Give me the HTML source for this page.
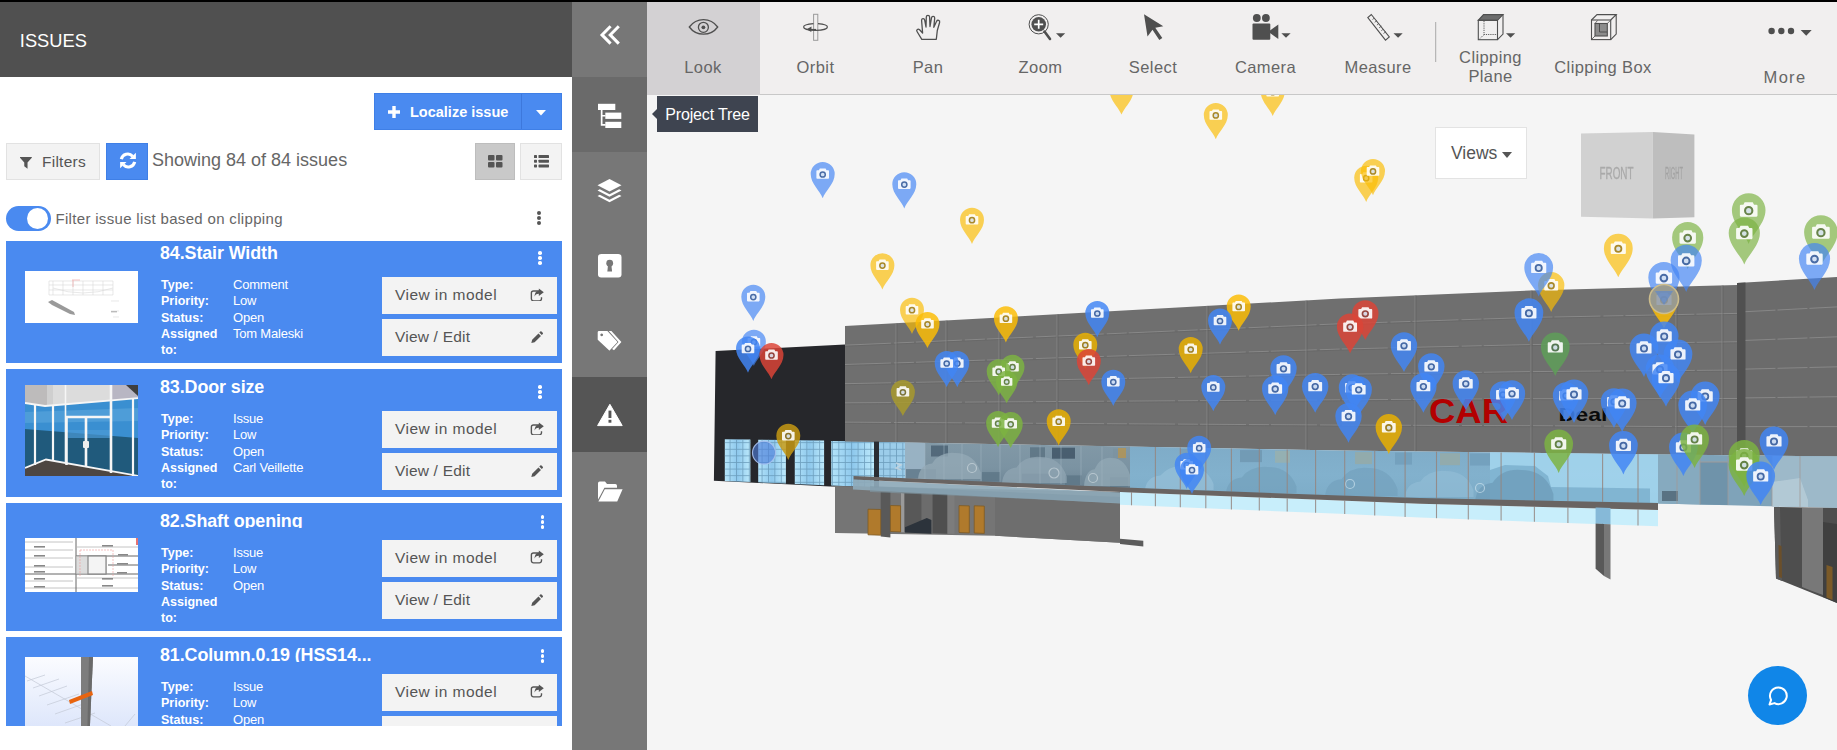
<!DOCTYPE html>
<html lang="en">
<head>
<meta charset="utf-8">
<title>Issues</title>
<style>
*{box-sizing:border-box;margin:0;padding:0}
html,body{width:1837px;height:750px;overflow:hidden;background:#fff;font-family:"Liberation Sans",sans-serif;}
body{position:relative}
.abs{position:absolute}
#topbar{left:0;top:0;width:1837px;height:2px;background:#000;z-index:50}
/* left panel */
#phead{left:0;top:2px;width:572px;height:75px;background:#505050;color:#fff}
#phead span{position:absolute;left:19.800px;top:27px;font-size:18.300px;line-height:24px;letter-spacing:0}
.btn-blue{background:#4a8af0;color:#fff;border:1px solid #3f7fe6}
#loc{left:374px;top:93px;width:188px;height:37px}
#loc .t{position:absolute;left:35px;top:8px;font-size:14.5px;font-weight:bold;line-height:20px;white-space:nowrap}
#loc .div{position:absolute;left:146px;top:0;width:1px;height:35px;background:#3d78dc}
.lbtn{background:#f3f3f3;border:1px solid #e2e2e2}
#filters{left:6px;top:143px;width:94px;height:37px}
#filters span{position:absolute;left:35px;top:8px;font-size:15.500px;color:#555;line-height:20px;letter-spacing:.25px}
#refresh{left:106px;top:143px;width:42px;height:37px}
#showing{left:152px;top:147px;font-size:18px;line-height:26px;color:#666;white-space:nowrap;letter-spacing:0}
#grid{left:475px;top:143px;width:40px;height:37px;background:#c9c9c9;border:1px solid #bdbdbd}
#list{left:520px;top:143px;width:42px;height:37px}
#toggle{left:6px;top:206px;width:45px;height:25px;border-radius:13px;background:#4a8af0}
#toggle i{position:absolute;left:21.300px;top:2px;width:21px;height:21px;border-radius:50%;background:#fff}
#ftxt{left:55.400px;top:208px;font-size:15px;line-height:22px;color:#666;white-space:nowrap;letter-spacing:.33px}
.kebab{width:4px;height:4px;border-radius:50%;background:#555;box-shadow:0 5px 0 #555,0 -5px 0 #555}
#listwrap{left:6px;top:241px;width:556px;height:485px;overflow:hidden}
.card{position:absolute;left:0;width:556px;height:128px;background:#4a8af0;color:#fff}
.card .title{position:absolute;left:154px;top:5.800px;font-size:17.900px;font-weight:bold;line-height:24px;height:19.400px;overflow:hidden;white-space:nowrap;letter-spacing:-.1px}
.card.c2 .b1{top:36.500px}.card.c2 .b2{top:78.800px}.card.c2 .kebab{left:534.500px;top:17px}
.card .lab{position:absolute;left:155px;top:42px;font-size:12.5px;font-weight:bold;line-height:16.3px;width:60px}
.card .val{position:absolute;left:227px;top:42px;font-size:13px;line-height:16.3px;white-space:nowrap;letter-spacing:-.2px}
.card .b{position:absolute;left:376px;width:175px;height:37px;background:#f3f3f3;color:#555;font-size:15.5px;line-height:20px}
.card .b span{position:absolute;left:13px;top:8px;white-space:nowrap;letter-spacing:.2px}
.card .b1 span{letter-spacing:.45px}
.card .b1{top:42px}.card .b2{top:84px}
.card .b svg{position:absolute;right:13.500px;top:10.500px;width:13.800px;height:13.800px}
.card .b2 svg{top:12px;width:13.400px;height:13.400px}
.card .kebab{position:absolute;left:532px;top:21px;background:#fff;box-shadow:0 5px 0 #fff,0 -5px 0 #fff;width:3.5px;height:3.5px}
.card .thumb{position:absolute;left:18.500px;width:113.500px;overflow:hidden;background:#fff}
/* sidebar */
#side{left:572px;top:2px;width:75px;height:748px;background:#777}
#side .it{position:absolute;left:0;width:75px;height:75px}
#side svg{position:absolute}
/* toolbar */
#tb{left:647px;top:2px;width:1190px;height:93px;background:#f1efef;border-bottom:1px solid #c8c8c8;z-index:20}
#tb .tl{position:absolute;width:113px;text-align:center;font-size:16.500px;line-height:19px;color:#666;letter-spacing:.4px}
#tb svg{position:absolute;overflow:visible}
#view{left:647px;top:95px;width:1190px;height:655px;background:#f5f5f5;overflow:hidden}
#tip{left:657px;top:96px;width:101px;height:36px;background:#3e4450;color:#fff;font-size:16px;line-height:38px;text-align:center;z-index:30;letter-spacing:-.15px}
#tip:before{content:"";position:absolute;left:-5px;top:13px;border:5px solid transparent;border-left:0;border-right:5px solid #3e4450}
#views{left:1435px;top:127px;width:92px;height:52px;background:#fff;border:1px solid #e3e3e3;z-index:10}
#views span{position:absolute;left:15px;top:13px;font-size:17.5px;color:#555;line-height:24px}
#views i{position:absolute;left:66px;top:24px;border:5.5px solid transparent;border-top:6px solid #555;border-bottom:0}
#chat{left:1748px;top:666px;width:59px;height:59px;border-radius:50%;background:#1086e8;z-index:10}
</style>
</head>
<body>
<div id="topbar" class="abs"></div>

<!-- LEFT PANEL -->
<div id="phead" class="abs"><span>ISSUES</span></div>
<div id="loc" class="abs btn-blue">
 <svg class="abs" style="left:12.500px;top:11.500px" width="12" height="12" viewBox="0 0 12 12"><path d="M4.300 0h3.400v4.300H12v3.400H7.700V12H4.300V7.700H0V4.300h4.300z" fill="#fff"/></svg>
 <span class="t">Localize issue</span><div class="div"></div>
 <svg class="abs" style="left:161px;top:16px" width="10" height="6" viewBox="0 0 10 6"><path d="M0 0h10L5 5.5z" fill="#fff"/></svg>
</div>
<div id="filters" class="abs lbtn">
 <svg class="abs" style="left:13px;top:12.500px" width="11.800" height="12" viewBox="0 0 13 13" preserveAspectRatio="none"><path d="M.3 0h12.400a.5.500 0 0 1 .3.800L8.300 6v6.800L4.700 10V6L0 .8A.5.500 0 0 1 .3 0z" fill="#555"/></svg>
 <span>Filters</span></div>
<div id="refresh" class="abs btn-blue">
 <svg class="abs" style="left:11.500px;top:8.300px" width="18" height="17" viewBox="0 0 18 17" fill="none" stroke="#fff" stroke-width="3.100"><path d="M2.300 7.200A6.600 6.600 0 0 1 13.600 4.200"/><path d="M15.700 9.800A6.600 6.600 0 0 1 4.400 12.800"/><path d="M16.900 .7v6.400h-6.400z" fill="#fff" stroke="none"/><path d="M1.100 16.300v-6.400h6.400z" fill="#fff" stroke="none"/></svg>
</div>
<div id="showing" class="abs">Showing 84 of 84 issues</div>
<div id="grid" class="abs">
 <svg class="abs" style="left:12px;top:11px" width="15" height="13" viewBox="0 0 15 13" fill="#555"><rect x="0" y="0" width="6.5" height="5.5" rx="1"/><rect x="8" y="0" width="6.5" height="5.5" rx="1"/><rect x="0" y="7" width="6.5" height="5.5" rx="1"/><rect x="8" y="7" width="6.5" height="5.5" rx="1"/></svg>
</div>
<div id="list" class="abs lbtn">
 <svg class="abs" style="left:13px;top:11px" width="15" height="13" viewBox="0 0 15 13" fill="#555"><rect x="0" y="0" width="3" height="3" rx=".6"/><rect x="4.5" y="0" width="10.5" height="3" rx=".6"/><rect x="0" y="4.7" width="3" height="3" rx=".6"/><rect x="4.5" y="4.7" width="10.5" height="3" rx=".6"/><rect x="0" y="9.4" width="3" height="3" rx=".6"/><rect x="4.5" y="9.4" width="10.5" height="3" rx=".6"/></svg>
</div>
<div id="toggle" class="abs"><i></i></div>
<div id="ftxt" class="abs">Filter issue list based on clipping</div>
<div class="abs kebab" style="left:537px;top:216px"></div>

<div id="listwrap" class="abs">
<div class="card" style="top:-6px">
 <div class="title">84.Stair Width</div>
 <div class="lab">Type:<br>Priority:<br>Status:<br>Assigned to:</div>
 <div class="val">Comment<br>Low<br>Open<br>Tom Maleski</div>
 <div class="kebab"></div>
 <div class="thumb" style="top:36px;height:52px">
  <svg width="114" height="52" viewBox="0 0 114 52"><rect width="114" height="52" fill="#fff"/>
   <g stroke="#d9d9d9" stroke-width=".6" fill="none"><path d="M24 10h64v14H24zM28 10v14M38 10v14M48 10v14M58 10v14M68 10v14M78 10v14M24 14h64M24 19h64"/><path d="M28 17q30 10 60 0"/><path d="M86 30h8M86 40h8M88 46h6"/></g>
   <path d="M47 9h8M48 9v7" stroke="#f0b0b0" stroke-width=".8" fill="none"/>
   <path d="M23 31l4-2 22 12 1 3-5-1-18-9z" fill="#9a9a9a"/>
   <rect x="86" y="40" width="6" height="1.4" fill="#bbb"/>
  </svg>
 </div>
 <div class="b b1"><span>View in model</span><svg width="15" height="15" viewBox="0 0 15 15"><use href="#i-share"/></svg></div>
 <div class="b b2"><span>View / Edit</span><svg width="15" height="15" viewBox="0 0 15 15"><use href="#i-pen"/></svg></div>
</div>

<div class="card" style="top:128px">
 <div class="title">83.Door size</div>
 <div class="lab">Type:<br>Priority:<br>Status:<br>Assigned to:</div>
 <div class="val">Issue<br>Low<br>Open<br>Carl Veillette</div>
 <div class="kebab"></div>
 <div class="thumb" style="top:16px;height:91px">
  <svg width="114" height="91" viewBox="0 0 114 91">
   <rect width="114" height="91" fill="#205a7c"/>
   <path d="M0 18l20 3 94-8v40L0 44z" fill="#3a8fd1"/>
   <path d="M0 27l114-4v13L0 38z" fill="#62abe0" opacity=".5"/>
   <path d="M43 45h42v8H43z" fill="#4b9ad6" opacity=".7"/>
   <path d="M0 0h114v13L20 21 0 18z" fill="#dcdcdc"/><path d="M0 0h22v21L0 18z" fill="#bdbbbb"/><path d="M22 0h6v20l-6 1z" fill="#cfcfcf"/><path d="M87 0h27v13l-27 2.300z" fill="#b8b6c3"/><path d="M101 0h13v12z" fill="#3f3f3f"/>
   <path d="M0 83l21-8.500L114 91H0z" fill="#4d4641"/>
   <g stroke="#f6f6f6" fill="none"><path d="M0 18l20 3 94-8" stroke-width="1.800"/><path d="M10 20v60M28 21v55" stroke-width="2.200"/><path d="M40.500 0v78" stroke-width="1.600"/><path d="M41 32h45" stroke-width="2.400"/><path d="M41.500 32v48M61 32v49" stroke-width="2.600"/><path d="M86 0v88" stroke-width="2.600"/><path d="M108 13v78" stroke-width="2.200"/><path d="M0 83l21-8.500L114 91" stroke-width="1.800"/></g>
   <rect x="58" y="56" width="6" height="7" rx="1" fill="#ededed"/>
  </svg>
 </div>
 <div class="b b1"><span>View in model</span><svg width="15" height="15" viewBox="0 0 15 15"><use href="#i-share"/></svg></div>
 <div class="b b2"><span>View / Edit</span><svg width="15" height="15" viewBox="0 0 15 15"><use href="#i-pen"/></svg></div>
</div>

<div class="card c2" style="top:262px">
 <div class="title">82.Shaft opening</div>
 <div class="lab">Type:<br>Priority:<br>Status:<br>Assigned to:</div>
 <div class="val">Issue<br>Low<br>Open</div>
 <div class="kebab"></div>
 <div class="thumb" style="top:35px;height:54px">
  <svg width="114" height="54" viewBox="0 0 114 54"><rect width="114" height="54" fill="#fff"/>
   <g stroke="#b5b5b5" stroke-width=".8" fill="none"><path d="M0 4h48M0 12h48M0 20h48M0 29h48M0 43h48M0 50h114M52 9h62M52 40h62"/></g>
   <g stroke="#666" stroke-width="1" fill="none"><path d="M51 0v54M0 36h114M51 18h63M83 27h30"/></g>
   <rect x="51" y="18" width="30" height="18" fill="#ddd" stroke="#999" stroke-width=".8"/><rect x="63" y="18" width="18" height="18" fill="#f4f4f4" stroke="#888" stroke-width="1.2"/>
   <path d="M55 12h33v26M55 12v26" stroke="#ef9a9a" stroke-width=".6" fill="none" stroke-dasharray="2 1"/>
   <g fill="#888"><rect x="9" y="8" width="11" height="1.6"/><rect x="9" y="17" width="11" height="1.6"/><rect x="9" y="27" width="11" height="1.6"/><rect x="9" y="33" width="11" height="1.6"/><rect x="9" y="40" width="11" height="1.6"/><rect x="9" y="48" width="11" height="1.6"/><rect x="77" y="7" width="11" height="1.6"/><rect x="77" y="40" width="11" height="1.6"/><rect x="77" y="47" width="11" height="1.6"/><rect x="93" y="16" width="10" height="1.6"/><rect x="92" y="25" width="11" height="1.6"/><rect x="92" y="34" width="10" height="1.6"/></g>
   <rect x="111" y="0" width="2" height="7" fill="#e57373"/>
  </svg>
 </div>
 <div class="b b1"><span>View in model</span><svg width="15" height="15" viewBox="0 0 15 15"><use href="#i-share"/></svg></div>
 <div class="b b2"><span>View / Edit</span><svg width="15" height="15" viewBox="0 0 15 15"><use href="#i-pen"/></svg></div>
</div>

<div class="card c2" style="top:396px">
 <div class="title">81.Column.0.19 (HSS14...</div>
 <div class="lab">Type:<br>Priority:<br>Status:<br>Assigned to:</div>
 <div class="val">Issue<br>Low<br>Open</div>
 <div class="kebab"></div>
 <div class="thumb" style="top:20px;height:90px">
  <svg width="114" height="90" viewBox="0 0 114 90"><defs><linearGradient id="cg" x1="0" y1="0" x2="0" y2="1"><stop offset="0" stop-color="#fbfcff"/><stop offset="1" stop-color="#d5e0fa"/></linearGradient></defs>
   <rect width="114" height="90" fill="url(#cg)"/>
   <g stroke="#c3c9d6" stroke-width=".7" fill="none"><path d="M0 19l86 50M2 24l18-6M8 31l26-9M14 39l28-10M22 48l32-11M30 57l34-12M40 66l30-10M100 69l10-12"/></g>
   <path d="M56 0h12l-4 90h-8z" fill="#7d7d7d"/><path d="M64 0h4l-4 90h-2z" fill="#6a6a6a"/>
   <path d="M44 43l23-9 1 4-23 9z" fill="#e8640f"/>
  </svg>
 </div>
 <div class="b b1"><span>View in model</span><svg width="15" height="15" viewBox="0 0 15 15"><use href="#i-share"/></svg></div>
 <div class="b b2"><span>View / Edit</span><svg width="15" height="15" viewBox="0 0 15 15"><use href="#i-pen"/></svg></div>
</div>
<svg width="0" height="0" style="position:absolute"><defs>
 <g id="i-share"><path d="M10 3.2H3.8A2.3 2.3 0 0 0 1.5 5.500v6.200A2.300 2.300 0 0 0 3.800 14h6.400a2.300 2.300 0 0 0 2.300-2.300V10" fill="none" stroke="#555" stroke-width="1.500"/><path d="M9.600 0.500 15 4.600 9.600 8.700V6.200C6.800 6.200 5.600 7.400 5 9.300 5 6 6.500 3.200 9.600 3z" fill="#555"/></g>
 <g id="i-pen"><path d="M1.500 13.500l.9-3.700 7.100-7.100 2.800 2.800-7.100 7.100zM10.400 1.800l1.100-1.100a1 1 0 0 1 1.400 0l1.400 1.400a1 1 0 0 1 0 1.400l-1.100 1.100z" fill="#555"/></g>
</defs></svg>

</div>

<!-- SIDEBAR -->
<div id="side" class="abs">
<div class="it" style="top:75px;background:#6a6a6a"></div>
<div class="it" style="top:375px;background:#555"></div>
<svg style="left:0;top:0" width="75" height="748" viewBox="572 2 75 748">
 <g fill="none" stroke="#fff" stroke-width="3" stroke-linejoin="miter"><path d="M610.600 26.200 602 34.900 610.600 43.600"/><path d="M618.800 26.200 610.200 34.900 618.800 43.600"/></g>
 <g fill="#fff"><rect x="598" y="103.800" width="17.300" height="6.200"/><rect x="605.300" y="112.600" width="16" height="6.300"/><rect x="605.300" y="121.800" width="16" height="6.200"/><path d="M600.800 109.500h1.700v5.400h3v1.600h-3v7.600h3v1.600h-4.700z"/></g>
 <g fill="#fff"><path d="M609.500 179 621.500 185.200 609.500 191.400 597.500 185.200z"/><path d="M599.800 189.300 609.500 194.300 619.200 189.300 621.500 190.500 609.500 196.800 597.500 190.500z"/><path d="M599.800 194.800 609.500 199.800 619.200 194.800 621.500 196 609.500 202.300 597.500 196z"/></g>
 <g><rect x="598" y="254" width="23.500" height="23.500" rx="3.200" fill="#fff"/><circle cx="609.700" cy="263.200" r="3.400" fill="#777"/><path d="M608.200 264h3l.9 7.500h-4.800z" fill="#777"/></g>
 <g fill="#fff"><path d="M599 330.900h8.400l9.700 10.700a.6.600 0 0 1 0 .8l-7.300 7.900a.6.600 0 0 1-.8 0l-11-10.300a1 1 0 0 1-.3-.7v-7.100a1.300 1.300 0 0 1 1.300-1.300zM601.700 333.500a1.400 1.400 0 1 0 .01 0z" fill-rule="evenodd"/><path d="M608.800 330.900h2.600l10 11.100-7.400 8.200-1.900-1.200 6.400-7z"/></g>
 <g><path d="M609.900 404.300 622.200 425.600H597.600z" fill="#fff" stroke="#fff" stroke-width="1" stroke-linejoin="round"/><rect x="608.500" y="410.600" width="2.900" height="7.400" fill="#555"/><rect x="608.500" y="419.800" width="2.900" height="2.900" fill="#555"/></g>
 <g fill="#fff"><path d="M598 483.300a1.700 1.700 0 0 1 1.700-1.700h5.300l2 2.400h8.300a1.700 1.700 0 0 1 1.700 1.700v2h-12.600l-4.500 8.600-1.900 3.200z"/><path d="M604.800 489.300H622.600L617.200 501.400H598.400z"/></g>
</svg>

</div>

<!-- TOOLBAR -->
<div id="tb" class="abs">
<div style="position:absolute;left:0;top:0;width:113px;height:93px;background:#d3d1d3"></div>
<div class="tl" style="left:-.5px;top:56px">Look</div>
<div class="tl" style="left:112px;top:56px">Orbit</div>
<div class="tl" style="left:224.500px;top:56px">Pan</div>
<div class="tl" style="left:337px;top:56px">Zoom</div>
<div class="tl" style="left:449.500px;top:56px">Select</div>
<div class="tl" style="left:562px;top:56px">Camera</div>
<div class="tl" style="left:674.500px;top:56px">Measure</div>
<div class="tl" style="left:787px;top:45.800px;line-height:18.700px">Clipping<br>Plane</div>
<div class="tl" style="left:899.500px;top:56px">Clipping Box</div>
<div class="tl" style="left:1081.500px;top:65.700px;letter-spacing:1.300px">More</div>
<svg style="left:0;top:0" width="1190" height="93" viewBox="647 2 1190 93">
 <!-- eye -->
 <g fill="none" stroke="#4f4f4f" stroke-width="1.300"><path d="M689.300 27C693 22 698 19.600 703.500 19.600S714 22 717.700 27C714 32 709 34.200 703.500 34.200S693 32 689.300 27z"/><circle cx="703.400" cy="27.300" r="5"/></g><circle cx="703.400" cy="27.300" r="1.900" fill="#4f4f4f"/>
 <!-- orbit -->
 <rect x="813.600" y="14.300" width="4.200" height="26" fill="#f1efef" stroke="#9a9a9a" stroke-width="1"/>
 <path d="M813.500 23.600C807 24.200 803.600 25.500 803.600 26.900 803.600 29 809 30.400 815.600 30.400S827.400 29 827.400 26.900C827.400 25.400 823.500 24.100 818 23.600" fill="none" stroke="#4f4f4f" stroke-width="1.200"/>
 <path d="M806.600 29.300 811.500 26.600 811.300 31.900z" fill="#4f4f4f"/><path d="M811 29.500h5" stroke="#4f4f4f" stroke-width="1.200"/>
 <!-- hand -->
 <path d="M921.800 39.300 917 31.500C916 29.800 918 28.300 919.600 29.800L922.600 33 921.600 20.500C921.400 18.300 924.300 18 924.700 20.200L926 27 926.300 17C926.400 14.700 929.500 14.700 929.600 17L930 26.500 931.500 17.800C931.900 15.600 934.900 16 934.700 18.200L933.800 27.300 936.600 21.300C937.500 19.400 940.200 20.400 939.600 22.500L937.300 30.500 936.300 39.300z" fill="none" stroke="#4f4f4f" stroke-width="1.300" stroke-linejoin="round"/>
 <!-- zoom -->
 <circle cx="1038.700" cy="24.300" r="9.600" fill="none" stroke="#4f4f4f" stroke-width="1"/><circle cx="1038.700" cy="24.300" r="7.300" fill="#4f4f4f"/><path d="M1034.200 24.300h9M1038.700 19.800v9" stroke="#fff" stroke-width="1.700"/><path d="M1044.500 31.500 1050 39" stroke="#4f4f4f" stroke-width="2.600" stroke-linecap="round"/>
 <path d="M1056 33.300h9.200l-4.600 4.500z" fill="#4f4f4f"/>
 <!-- select -->
 <path d="M1144 14.300 1163.300 26.300 1155.300 27.800 1162.300 38 1159.300 40 1152.500 29.800 1147.500 36.500z" fill="#4f4f4f"/>
 <!-- camera -->
 <g fill="#4f4f4f"><circle cx="1256.800" cy="18" r="3.900"/><circle cx="1265.900" cy="18" r="3.900"/><rect x="1252.500" y="23.400" width="17.800" height="16.400" rx="1"/><path d="M1270 30.500 1278.300 24.500V39L1270 33z"/><path d="M1281.400 33.300h9.200l-4.600 4.500z"/></g>
 <!-- measure -->
 <g><path d="M1371.300 14.500 1389.300 37 1385.500 40.200 1367.800 17.500z" fill="#f1efef" stroke="#4f4f4f" stroke-width="1.100"/><path d="M1372.500 19.500l1.500-1.200M1374.700 22.300l2.300-1.800M1376.900 25.100l1.500-1.200M1379.100 27.900l2.300-1.800M1381.300 30.700l1.500-1.200M1383.500 33.500l2.300-1.800" stroke="#4f4f4f" stroke-width=".8"/><path d="M1393.500 33.300h9.200l-4.600 4.500z" fill="#4f4f4f"/></g>
 <!-- divider -->
 <rect x="1435.200" y="22" width="1" height="40" fill="#a9a9a9"/>
 <!-- clipping plane -->
 <g fill="none" stroke="#4f4f4f" stroke-width="1.100"><path d="M1483.500 14.600h19.500l-5.500 5.700h-19.200z" fill="#6c6c6c"/><rect x="1478.300" y="20.300" width="19.200" height="19.400"/><path d="M1503 14.600v19.500l-5.500 5.600"/><path d="M1484 21v13.500h13M1484 34.500l-5 5" stroke-dasharray="1.200 1" stroke-width=".9"/></g>
 <path d="M1506 33.300h9.200l-4.600 4.500z" fill="#4f4f4f"/>
 <!-- clipping box -->
 <g fill="none" stroke="#4f4f4f" stroke-width="1.100"><rect x="1591.500" y="20" width="19.200" height="19.600"/><path d="M1591.500 20 1597 14.600h19.200l-5.500 5.400M1616.200 14.600v19.500l-5.500 5.500"/><rect x="1595" y="23.500" width="12.300" height="12.500" fill="#8c8c8c"/><path d="M1599.500 24v8h7.500" stroke-width="1"/><path d="M1595 23.500l2.500-3M1607.300 23.500l3-3M1595 36l-3 3" stroke-width=".8"/></g>
 <!-- more -->
 <g fill="#4f4f4f"><circle cx="1771.600" cy="31" r="3.200"/><circle cx="1781.300" cy="31" r="3.200"/><circle cx="1791" cy="31" r="3.200"/><path d="M1800.700 30h11l-5.500 5.700z"/></g>
</svg>

</div>
<div id="tip" class="abs">Project Tree</div>

<!-- 3D VIEW -->
<div id="view" class="abs">
<!--VIEWSTART-->
<svg class="abs" style="left:0;top:0" width="1190" height="655" viewBox="647 95 1190 655">
<defs>
<linearGradient id="gl1" x1="0" y1="0" x2="0" y2="1"><stop offset="0" stop-color="#8299a7"/><stop offset=".55" stop-color="#7b93a2"/><stop offset="1" stop-color="#6a8292"/></linearGradient>
<linearGradient id="gl2" x1="0" y1="0" x2="0" y2="1"><stop offset="0" stop-color="#7facc8"/><stop offset=".5" stop-color="#82b1cd"/><stop offset="1" stop-color="#7cabc6"/></linearGradient>
<linearGradient id="win" x1="0" y1="0" x2="1" y2="0"><stop offset="0" stop-color="#b4e4fa"/><stop offset=".5" stop-color="#8ec8ec"/><stop offset="1" stop-color="#bdeafc"/></linearGradient>
<pattern id="wgrid" width="6.4" height="6.6" patternUnits="userSpaceOnUse"><path d="M0 .4h6.400M.4 0v6.600" stroke="#5f8fb0" stroke-width=".9" opacity=".75"/></pattern>
<g id="pin"><path d="M0 0C-2.500-7-12-14.500-12-24.200A12 12 0 1 1 12-24.200C12-14.500 2.500-7 0 0z"/></g>
<g id="cam" transform="translate(0 1.2)"><path d="M-6.300-28.500a.8.800 0 0 1 .8-.8h1.700l.9-1.700h5.800l.9 1.700h1.700a.8.800 0 0 1 .8.800v7a.8.800 0 0 1-.8.800h-11a.8.800 0 0 1-.8-.8z" fill="#fff" stroke="none"/><circle cx="0" cy="-25" r="2.600" fill="#dbe6f5" stroke-width="1.500"/></g>
</defs>
<polygon points="715.6,351 845,344.4 845,441.5 879,442 879,487.6 830,486.4 713.9,480.8" fill="#26272b"/>
<polygon points="724.8,439.2 750.4,439.6 750.4,482 724.8,480.9" fill="url(#win)"/><polygon points="724.8,439.2 750.4,439.6 750.4,482 724.8,480.9" fill="url(#wgrid)"/>
<polygon points="758.2,439.7 785.9,440 785.9,483.4 758.2,482.3" fill="url(#win)"/><polygon points="758.2,439.7 785.9,440 785.9,483.4 758.2,482.3" fill="url(#wgrid)"/>
<polygon points="794.8,440.2 824.1,440.6 824.1,485.3 794.8,484" fill="url(#win)"/><polygon points="794.8,440.2 824.1,440.6 824.1,485.3 794.8,484" fill="url(#wgrid)"/>
<polygon points="831.2,441 874,441.6 874,487.3 831.2,485.6" fill="url(#win)"/><polygon points="831.2,441 874,441.6 874,487.3 831.2,485.6" fill="url(#wgrid)"/>
<polygon points="845,326 1340,298.5 1530,290.5 1737,285 1737,455.3 1658,454.4 1340,450.4 845,441.4" fill="#6f6f6f"/>
<polygon points="1737,283 1837,277 1837,456.5 1737,455.3" fill="#6b6b6b"/>
<polygon points="1737,283 1745.5,282.5 1745.5,455.4 1737,455.3" fill="#505050"/>
<polyline points="845,345.2 1340,323.8 1530,317.5 1658,315 1737,313.4" fill="none" stroke="#9a9a9a" stroke-width="1" stroke-dasharray="46 3 20 2" opacity=".6"/>
<polyline points="845,346.2 1340,324.8 1530,318.5 1658,316 1737,314.4" fill="none" stroke="#5c5c5c" stroke-width=".8" opacity=".45"/>
<polyline points="1745.5,311.7 1837,306.9" fill="none" stroke="#9a9a9a" stroke-width="1" stroke-dasharray="30 2" opacity=".6"/>
<polyline points="845,364.5 1340,349.1 1530,344.6 1658,342.9 1737,341.8" fill="none" stroke="#9a9a9a" stroke-width="1" stroke-dasharray="46 3 20 2" opacity=".6"/>
<polyline points="845,365.5 1340,350.1 1530,345.6 1658,343.9 1737,342.8" fill="none" stroke="#5c5c5c" stroke-width=".8" opacity=".45"/>
<polyline points="1745.5,340.4 1837,336.8" fill="none" stroke="#9a9a9a" stroke-width="1" stroke-dasharray="30 2" opacity=".6"/>
<polyline points="845,383.7 1340,374.4 1530,371.6 1658,370.7 1737,370.1" fill="none" stroke="#9a9a9a" stroke-width="1" stroke-dasharray="46 3 20 2" opacity=".6"/>
<polyline points="845,384.7 1340,375.4 1530,372.6 1658,371.7 1737,371.1" fill="none" stroke="#5c5c5c" stroke-width=".8" opacity=".45"/>
<polyline points="1745.5,369.1 1837,366.8" fill="none" stroke="#9a9a9a" stroke-width="1" stroke-dasharray="30 2" opacity=".6"/>
<polyline points="845,402.9 1340,399.8 1530,398.7 1658,398.6 1737,398.5" fill="none" stroke="#9a9a9a" stroke-width="1" stroke-dasharray="46 3 20 2" opacity=".6"/>
<polyline points="845,403.9 1340,400.8 1530,399.7 1658,399.6 1737,399.5" fill="none" stroke="#5c5c5c" stroke-width=".8" opacity=".45"/>
<polyline points="1745.5,397.9 1837,396.7" fill="none" stroke="#9a9a9a" stroke-width="1" stroke-dasharray="30 2" opacity=".6"/>
<polyline points="845,422.2 1340,425.1 1530,425.7 1658,426.5 1737,426.9" fill="none" stroke="#9a9a9a" stroke-width="1" stroke-dasharray="46 3 20 2" opacity=".6"/>
<polyline points="845,423.2 1340,426.1 1530,426.7 1658,427.5 1737,427.9" fill="none" stroke="#5c5c5c" stroke-width=".8" opacity=".45"/>
<polyline points="1745.5,426.6 1837,426.6" fill="none" stroke="#9a9a9a" stroke-width="1" stroke-dasharray="30 2" opacity=".6"/>
<line x1="896" y1="323.2" x2="896" y2="442.3" stroke="#909090" stroke-width=".9" opacity=".7"/>
<line x1="897" y1="323.2" x2="897" y2="442.3" stroke="#5a5a5a" stroke-width=".7" opacity=".7"/>
<line x1="946" y1="320.4" x2="946" y2="443.2" stroke="#909090" stroke-width=".9" opacity=".7"/>
<line x1="947" y1="320.4" x2="947" y2="443.2" stroke="#5a5a5a" stroke-width=".7" opacity=".7"/>
<line x1="999" y1="317.4" x2="999" y2="444.2" stroke="#909090" stroke-width=".9" opacity=".7"/>
<line x1="1000" y1="317.4" x2="1000" y2="444.2" stroke="#5a5a5a" stroke-width=".7" opacity=".7"/>
<line x1="1057" y1="314.2" x2="1057" y2="445.3" stroke="#909090" stroke-width=".9" opacity=".7"/>
<line x1="1058" y1="314.2" x2="1058" y2="445.3" stroke="#5a5a5a" stroke-width=".7" opacity=".7"/>
<line x1="1207" y1="305.9" x2="1207" y2="448" stroke="#909090" stroke-width=".9" opacity=".7"/>
<line x1="1208" y1="305.9" x2="1208" y2="448" stroke="#5a5a5a" stroke-width=".7" opacity=".7"/>
<line x1="1306" y1="300.4" x2="1306" y2="449.8" stroke="#909090" stroke-width=".9" opacity=".7"/>
<line x1="1307" y1="300.4" x2="1307" y2="449.8" stroke="#5a5a5a" stroke-width=".7" opacity=".7"/>
<line x1="1415" y1="295.3" x2="1415" y2="451.3" stroke="#909090" stroke-width=".9" opacity=".7"/>
<line x1="1416" y1="295.3" x2="1416" y2="451.3" stroke="#5a5a5a" stroke-width=".7" opacity=".7"/>
<line x1="1531" y1="290.5" x2="1531" y2="452.8" stroke="#909090" stroke-width=".9" opacity=".7"/>
<line x1="1532" y1="290.5" x2="1532" y2="452.8" stroke="#5a5a5a" stroke-width=".7" opacity=".7"/>
<line x1="1676" y1="286.6" x2="1676" y2="454.6" stroke="#909090" stroke-width=".9" opacity=".7"/>
<line x1="1677" y1="286.6" x2="1677" y2="454.6" stroke="#5a5a5a" stroke-width=".7" opacity=".7"/>
<line x1="1722" y1="285.4" x2="1722" y2="455.1" stroke="#909090" stroke-width=".9" opacity=".7"/>
<line x1="1723" y1="285.4" x2="1723" y2="455.1" stroke="#5a5a5a" stroke-width=".7" opacity=".7"/>
<text x="1429" y="423" font-family="Liberation Sans, sans-serif" font-weight="bold" font-size="34.500" fill="#b30000" textLength="79" lengthAdjust="spacingAndGlyphs">CAR</text>
<text x="1558.500" y="420.800" font-family="Liberation Sans, sans-serif" font-weight="bold" font-size="19" fill="#0a0a0a" textLength="49" lengthAdjust="spacingAndGlyphs">Deal</text>
<polygon points="835,486 1120,492 1120,542.8 995,535.8 835,533" fill="#757575"/>
<polygon points="995,490 1120,492 1120,542.8 995,535.8" fill="#6e6e6e"/>
<polygon points="1120,538.8 1143.3,540.8 1143.3,546.6 1120,544" fill="#5c5c5c"/>
<polygon points="901,493 904.5,493.5 904.5,532.3 901,532.2" fill="#9a9a9a"/>
<polygon points="904.5,493 921.7,493.5 921.7,532.8 904.5,532.3" fill="#585858"/>
<polygon points="921.7,493 932.5,493.5 932.5,533.2 921.7,532.8" fill="#6c6c6c"/>
<polygon points="932.5,493 947.5,493.5 947.5,533.7 932.5,533.2" fill="#4f4f4f"/>
<polygon points="947.5,493 954.5,493.5 954.5,533.9 947.5,533.7" fill="#7c7c7c"/>
<polygon points="905,527.3 926.8,518 931.4,520 931.4,533.8 905,532.6" fill="#2c333b"/>
<polygon points="880.7,492 890.4,492 890.4,537.6 880.7,536.5" fill="#595959"/>
<polygon points="868,509.2 880.7,509.5 880.7,535.2 868,534.8" fill="#b07a2c" stroke="#7d5a24" stroke-width=".8"/>
<polygon points="890.4,505.5 900.6,505.8 900.6,531.9 890.4,531.5" fill="#b07a2c" stroke="#7d5a24" stroke-width=".8"/>
<polygon points="959,505.6 969.3,505.9 969.3,532.9 959,532.5" fill="#b07a2c" stroke="#7d5a24" stroke-width=".8"/>
<polygon points="974.2,505.8 984.3,506.1 984.3,533.4 974.2,533" fill="#b07a2c" stroke="#7d5a24" stroke-width=".8"/>
<polygon points="879,442 1130,446.6 1130,489 879,478" fill="url(#gl1)"/>
<polygon points="879,442 905,442.5 905,479 879,478" fill="#9ccdea"/><polygon points="879,442 905,442.5 905,479 879,478" fill="url(#wgrid)"/>
<rect x="874" y="441.600" width="5" height="46" fill="#2a2d33"/>
<polygon points="905,442.5 925,443 925,479.5 905,479" fill="#9bb5c6" opacity=".9"/>
<rect x="906" y="469.1" width="30" height="9.500" fill="#5d7686" opacity=".8"/>
<rect x="982" y="472.1" width="18" height="9.500" fill="#5d7686" opacity=".8"/>
<rect x="1022" y="473.7" width="28" height="9.500" fill="#5d7686" opacity=".8"/>
<rect x="1065" y="475.4" width="17" height="9.500" fill="#5d7686" opacity=".8"/>
<rect x="1110" y="477.2" width="18" height="9.500" fill="#5d7686" opacity=".8"/>
<rect x="931" y="445.5" width="17" height="11" fill="#4b6273" opacity=".85"/>
<rect x="1030" y="447.3" width="15" height="11" fill="#5c7383" opacity=".85"/>
<rect x="1052" y="447.7" width="23" height="11" fill="#3f5566" opacity=".85"/>
<rect x="1113" y="448.8" width="13" height="11" fill="#7d93a0" opacity=".85"/>
<rect x="1118" y="448" width="8" height="10" fill="#b59552" opacity=".8"/>
<path d="M918 479q1.3 -14.3 14.1 -15.6q7.7 -11.7 23 -10.4q19.2 0 25.6 19.5l0 6.5l-64 0z" fill="#94a9b5" opacity="0.8"/>
<path d="M1002 483q1.3 -14.3 14.5 -15.6q7.9 -11.7 23.8 -10.4q19.8 0 26.4 19.5l0 6.5l-66 0z" fill="#90a6b3" opacity="0.75"/>
<path d="M1084 486q1 -15.4 10.6 -16.8q5.8 -12.6 17.3 -11.2q14.4 0 19.2 21l0 7l-48 0z" fill="#91a7b4" opacity="0.8"/>
<circle cx="972" cy="468" r="4.5" fill="none" stroke="#d4dde2" stroke-width="1.200" opacity=".6"/>
<circle cx="1054" cy="473" r="5" fill="none" stroke="#d4dde2" stroke-width="1.200" opacity=".6"/>
<circle cx="1093" cy="478" r="4.5" fill="none" stroke="#d4dde2" stroke-width="1.200" opacity=".6"/>
<path d="M896 463l5 2-5 3 5 2" stroke="#c8d6de" stroke-width="1.500" fill="none" opacity=".8"/>
<line x1="925" y1="443.4" x2="925" y2="478.8" stroke="#9fb3bf" stroke-width=".8" opacity=".7"/>
<line x1="944" y1="443.8" x2="944" y2="479.6" stroke="#9fb3bf" stroke-width=".8" opacity=".7"/>
<line x1="962" y1="444.1" x2="962" y2="480.3" stroke="#9fb3bf" stroke-width=".8" opacity=".7"/>
<line x1="981" y1="444.4" x2="981" y2="481.1" stroke="#9fb3bf" stroke-width=".8" opacity=".7"/>
<line x1="1000" y1="444.8" x2="1000" y2="481.8" stroke="#9fb3bf" stroke-width=".8" opacity=".7"/>
<line x1="1020" y1="445.1" x2="1020" y2="482.6" stroke="#9fb3bf" stroke-width=".8" opacity=".7"/>
<line x1="1040" y1="445.5" x2="1040" y2="483.4" stroke="#9fb3bf" stroke-width=".8" opacity=".7"/>
<line x1="1061" y1="445.9" x2="1061" y2="484.2" stroke="#9fb3bf" stroke-width=".8" opacity=".7"/>
<line x1="1081" y1="446.2" x2="1081" y2="485" stroke="#9fb3bf" stroke-width=".8" opacity=".7"/>
<line x1="1102" y1="446.6" x2="1102" y2="485.9" stroke="#9fb3bf" stroke-width=".8" opacity=".7"/>
<polygon points="1130,446.6 1340,450.4 1658,454.4 1658,504 1420,499 1340,496.5 1130,489.5" fill="url(#gl2)"/>
<polygon points="1490,452.3 1658,454.4 1658,503 1490,499.5" fill="#a9dcf4" opacity=".75"/>
<polygon points="1490,470 1505,465 1535,466 1548,476 1551,487 1650,488.5 1650,503 1490,499.5" fill="#80b3d1" opacity=".95"/>
<rect x="1180" y="449" width="12" height="12" fill="#7a9ab0" opacity=".7"/>
<rect x="1240" y="450.1" width="22" height="12" fill="#6c93ad" opacity=".7"/>
<rect x="1275" y="450.7" width="15" height="12" fill="#9db0a8" opacity=".7"/>
<rect x="1355" y="452.1" width="17" height="12" fill="#9aa9a0" opacity=".7"/>
<rect x="1395" y="452.6" width="17" height="12" fill="#6f9bb8" opacity=".7"/>
<rect x="1440" y="453.2" width="20" height="12" fill="#9aa9a0" opacity=".7"/>
<rect x="1470" y="453.5" width="20" height="12" fill="#6f9bb8" opacity=".7"/>
<path d="M1145 490q1.4 -13.2 15.4 -14.4q8.4 -10.8 25.2 -9.6q21 0 28 18l0 6l-70 0z" fill="#9cc4dc" opacity="0.55"/>
<path d="M1226 493q1.4 -14.3 15.8 -15.6q8.6 -11.7 25.9 -10.4q21.6 0 28.8 19.5l0 6.5l-72 0z" fill="#6f9cb8" opacity="0.55"/>
<path d="M1325 496q1.5 -15.4 16.3 -16.8q8.9 -12.6 26.6 -11.2q22.2 0 29.6 21l0 7l-74 0z" fill="#729fbb" opacity="0.6"/>
<path d="M1405 497q1.4 -14.3 15.4 -15.6q8.4 -11.7 25.2 -10.4q21 0 28 19.5l0 6.5l-70 0z" fill="#98c2da" opacity="0.5"/>
<path d="M1475 502q1.6 -17.6 17.6 -19.2q9.6 -14.4 28.8 -12.8q24 0 32 24l0 8l-80 0z" fill="#6c9ab6" opacity="0.7"/>
<circle cx="1350" cy="484" r="4.5" fill="none" stroke="#d6eaf4" stroke-width="1.200" opacity=".6"/>
<circle cx="1480" cy="488" r="4.5" fill="none" stroke="#d6eaf4" stroke-width="1.200" opacity=".6"/>
<line x1="1155.4" y1="447" x2="1155.4" y2="488.7" stroke="#94857f" stroke-width="1.100" opacity=".85"/>
<line x1="1180.3" y1="447.5" x2="1180.3" y2="489.6" stroke="#94857f" stroke-width="1.100" opacity=".85"/>
<line x1="1205.8" y1="448" x2="1205.8" y2="490.6" stroke="#94857f" stroke-width="1.100" opacity=".85"/>
<line x1="1231.4" y1="448.4" x2="1231.4" y2="491.5" stroke="#94857f" stroke-width="1.100" opacity=".85"/>
<line x1="1259.3" y1="448.9" x2="1259.3" y2="492.6" stroke="#94857f" stroke-width="1.100" opacity=".85"/>
<line x1="1287.2" y1="449.4" x2="1287.2" y2="493.6" stroke="#94857f" stroke-width="1.100" opacity=".85"/>
<line x1="1315.6" y1="450" x2="1315.6" y2="494.7" stroke="#94857f" stroke-width="1.100" opacity=".85"/>
<line x1="1344.7" y1="450.5" x2="1344.7" y2="495.7" stroke="#94857f" stroke-width="1.100" opacity=".85"/>
<line x1="1374.7" y1="450.8" x2="1374.7" y2="496.6" stroke="#94857f" stroke-width="1.100" opacity=".85"/>
<line x1="1405.1" y1="451.2" x2="1405.1" y2="497.6" stroke="#94857f" stroke-width="1.100" opacity=".85"/>
<line x1="1436.5" y1="451.6" x2="1436.5" y2="498.3" stroke="#94857f" stroke-width="1.100" opacity=".85"/>
<line x1="1468.3" y1="452" x2="1468.3" y2="499" stroke="#94857f" stroke-width="1.100" opacity=".85"/>
<line x1="1501.1" y1="452.4" x2="1501.1" y2="499.7" stroke="#94857f" stroke-width="1.100" opacity=".85"/>
<line x1="1534.4" y1="452.8" x2="1534.4" y2="500.4" stroke="#94857f" stroke-width="1.100" opacity=".85"/>
<line x1="1567.9" y1="453.3" x2="1567.9" y2="501.1" stroke="#94857f" stroke-width="1.100" opacity=".85"/>
<line x1="1602.6" y1="453.7" x2="1602.6" y2="501.8" stroke="#94857f" stroke-width="1.100" opacity=".85"/>
<line x1="1638" y1="454.1" x2="1638" y2="502.6" stroke="#94857f" stroke-width="1.100" opacity=".85"/>
<polygon points="853,479.5 1120,492.5 1120,503.5 853,489.5" fill="#8ea9b8" opacity=".92"/>
<polygon points="870,486 1120,497 1120,503 870,492" fill="#7f9aaa" opacity=".55"/>
<polygon points="1120,491 1131,492.4 1340,500.6 1420,503.7 1658,510 1658,526.3 1420,517.6 1340,513.8 1120,504.8" fill="#c8eefb"/>
<line x1="1131.5" y1="492.4" x2="1131.5" y2="505.3" stroke="#94857f" stroke-width="1.100" opacity=".85"/>
<line x1="1155.4" y1="493.4" x2="1155.4" y2="506.2" stroke="#94857f" stroke-width="1.100" opacity=".85"/>
<line x1="1180.3" y1="494.3" x2="1180.3" y2="507.3" stroke="#94857f" stroke-width="1.100" opacity=".85"/>
<line x1="1205.8" y1="495.3" x2="1205.8" y2="508.3" stroke="#94857f" stroke-width="1.100" opacity=".85"/>
<line x1="1231.4" y1="496.3" x2="1231.4" y2="509.4" stroke="#94857f" stroke-width="1.100" opacity=".85"/>
<line x1="1259.3" y1="497.4" x2="1259.3" y2="510.5" stroke="#94857f" stroke-width="1.100" opacity=".85"/>
<line x1="1287.2" y1="498.5" x2="1287.2" y2="511.6" stroke="#94857f" stroke-width="1.100" opacity=".85"/>
<line x1="1315.6" y1="499.6" x2="1315.6" y2="512.8" stroke="#94857f" stroke-width="1.100" opacity=".85"/>
<line x1="1344.7" y1="500.8" x2="1344.7" y2="514" stroke="#94857f" stroke-width="1.100" opacity=".85"/>
<line x1="1374.7" y1="501.9" x2="1374.7" y2="515.4" stroke="#94857f" stroke-width="1.100" opacity=".85"/>
<line x1="1405.1" y1="503.1" x2="1405.1" y2="516.9" stroke="#94857f" stroke-width="1.100" opacity=".85"/>
<line x1="1436.5" y1="504.1" x2="1436.5" y2="518.2" stroke="#94857f" stroke-width="1.100" opacity=".85"/>
<line x1="1468.3" y1="505" x2="1468.3" y2="519.4" stroke="#94857f" stroke-width="1.100" opacity=".85"/>
<line x1="1501.1" y1="505.8" x2="1501.1" y2="520.6" stroke="#94857f" stroke-width="1.100" opacity=".85"/>
<line x1="1534.4" y1="506.7" x2="1534.4" y2="521.8" stroke="#94857f" stroke-width="1.100" opacity=".85"/>
<line x1="1567.9" y1="507.6" x2="1567.9" y2="523" stroke="#94857f" stroke-width="1.100" opacity=".85"/>
<line x1="1602.6" y1="508.5" x2="1602.6" y2="524.3" stroke="#94857f" stroke-width="1.100" opacity=".85"/>
<line x1="1638" y1="509.5" x2="1638" y2="525.6" stroke="#94857f" stroke-width="1.100" opacity=".85"/>
<polygon points="853.5,476 1131,487.8 1340,495.6 1420,498 1658,503 1658,510 1420,503.7 1340,500.6 1131,492.4 853.5,479.5" fill="#696462"/>
<polygon points="1658,454.4 1737,455.3 1837,456.5 1837,507.8 1658,503.4" fill="#7fa3b9"/>
<polygon points="1658,454.4 1700,455 1700,504.4 1658,503.4" fill="#86aabf"/>
<polygon points="1700,462 1728,462 1728,505 1700,504.4" fill="#6f93aa"/>
<polygon points="1772,456 1837,456.5 1837,507.8 1772,506.2" fill="#9db9c9"/>
<polygon points="1772,482 1800,478 1808,500 1808,507 1772,506.2" fill="#b8cdd8" opacity=".8"/>
<rect x="1662" y="491" width="16" height="10" fill="#4d6474" opacity=".8"/>
<line x1="1677" y1="456" x2="1677" y2="503.9" stroke="#a09a98" stroke-width="1" opacity=".8"/>
<line x1="1700" y1="456" x2="1700" y2="504.4" stroke="#a09a98" stroke-width="1" opacity=".8"/>
<line x1="1728" y1="456" x2="1728" y2="505.1" stroke="#a09a98" stroke-width="1" opacity=".8"/>
<line x1="1772" y1="456" x2="1772" y2="506.2" stroke="#a09a98" stroke-width="1" opacity=".8"/>
<line x1="1800" y1="456" x2="1800" y2="506.9" stroke="#a09a98" stroke-width="1" opacity=".8"/>
<line x1="1700" y1="462" x2="1728" y2="462" stroke="#a09a98" stroke-width="1"/>
<rect x="1737" y="455" width="7" height="12" fill="#505050" opacity=".8"/>
<polygon points="1595.6,507.5 1610.5,508 1610.5,524.3 1595.6,523.5" fill="#86b9d8"/>
<polygon points="1595.6,523.5 1604,524 1604,576 1595.6,568.8" fill="#595959"/>
<polygon points="1604,524 1610.5,524.3 1610.5,579.6 1604,576" fill="#787878"/>
<polygon points="1774,507 1837,508 1837,603 1776,578.5" fill="#4e4e4e"/>
<polygon points="1802,508 1823,508 1823,595 1812,591 1802,587" fill="#787878"/>
<polygon points="1774,507 1780,507 1782,581 1776,578.5" fill="#5a5a5a"/>
<polygon points="1823,522 1837,524 1837,603 1823,597" fill="#404040"/>
<polygon points="1826.5,565 1832.5,567 1832.5,600 1826.5,597.5" fill="#7b5a28"/>
<polygon points="1778.5,545 1781.5,546 1782,578 1779,577" fill="#6b4f2a"/>
<polygon points="1581,133.600 1652.800,132 1652.800,218.500 1581,216.700" fill="#d1d1d1"/>
<polygon points="1652.800,132 1694.400,134.500 1694.400,217.200 1652.800,218.500" fill="#bebebe"/>
<text x="1616.500" y="179.300" stroke="#a9a9a9" stroke-width=".35" text-anchor="middle" font-family="Liberation Sans, sans-serif" font-size="17" fill="#a9a9a9" textLength="34" lengthAdjust="spacingAndGlyphs" style="filter:blur(.5px)">FRONT</text>
<text x="1674" y="179.300" stroke="#a3a3a3" stroke-width=".3" text-anchor="middle" font-family="Liberation Sans, sans-serif" font-size="17" fill="#a3a3a3" textLength="18" lengthAdjust="spacingAndGlyphs" style="filter:blur(.5px)">RIGHT</text>
<g transform="translate(1121.5 114.6) scale(1)"><use href="#pin" fill="#fbbc05" opacity=".68"/><g stroke="#a18226" opacity=".9"><use href="#cam"/></g></g>
<g transform="translate(1215.8 139.2) scale(1)"><use href="#pin" fill="#fbbc05" opacity=".68"/><g stroke="#a18226" opacity=".9"><use href="#cam"/></g></g>
<g transform="translate(1272.7 116) scale(1)"><use href="#pin" fill="#fbbc05" opacity=".68"/><g stroke="#a18226" opacity=".9"><use href="#cam"/></g></g>
<g transform="translate(1366.2 202) scale(1)"><use href="#pin" fill="#fbbc05" opacity=".68"/><g stroke="#a18226" opacity=".9"><use href="#cam"/></g></g>
<g transform="translate(1373 195.2) scale(1)"><use href="#pin" fill="#fbbc05" opacity=".68"/><g stroke="#a18226" opacity=".9"><use href="#cam"/></g></g>
<g transform="translate(822.7 198.3) scale(1)"><use href="#pin" fill="#4285f4" opacity=".68"/><g stroke="#45669e" opacity=".9"><use href="#cam"/></g></g>
<g transform="translate(904.3 208.4) scale(1)"><use href="#pin" fill="#4285f4" opacity=".68"/><g stroke="#45669e" opacity=".9"><use href="#cam"/></g></g>
<g transform="translate(972 244) scale(1)"><use href="#pin" fill="#fbbc05" opacity=".68"/><g stroke="#a18226" opacity=".9"><use href="#cam"/></g></g>
<g transform="translate(882.4 289.4) scale(1)"><use href="#pin" fill="#fbbc05" opacity=".68"/><g stroke="#a18226" opacity=".9"><use href="#cam"/></g></g>
<g transform="translate(753.3 320.9) scale(1)"><use href="#pin" fill="#4285f4" opacity=".68"/><g stroke="#45669e" opacity=".9"><use href="#cam"/></g></g>
<g transform="translate(753.9 366) scale(1)"><use href="#pin" fill="#4285f4" opacity=".68"/><g stroke="#45669e" opacity=".9"><use href="#cam"/></g></g>
<g transform="translate(748 372.7) scale(1)"><use href="#pin" fill="#4285f4" opacity=".84"/><g stroke="#45669e" opacity=".9"><use href="#cam"/></g></g>
<g transform="translate(771.5 379.3) scale(1)"><use href="#pin" fill="#db4437" opacity=".84"/><g stroke="#91463f" opacity=".9"><use href="#cam"/></g></g>
<g transform="translate(912 334) scale(1)"><use href="#pin" fill="#fbbc05" opacity=".68"/><g stroke="#a18226" opacity=".9"><use href="#cam"/></g></g>
<g transform="translate(927.5 348.1) scale(1)"><use href="#pin" fill="#fbbc05" opacity=".84"/><g stroke="#a18226" opacity=".9"><use href="#cam"/></g></g>
<g transform="translate(1005.9 342.5) scale(1)"><use href="#pin" fill="#fbbc05" opacity=".84"/><g stroke="#a18226" opacity=".9"><use href="#cam"/></g></g>
<g transform="translate(957.3 387.3) scale(1)"><use href="#pin" fill="#4285f4" opacity=".84"/><g stroke="#45669e" opacity=".9"><use href="#cam"/></g></g>
<g transform="translate(946.7 387.3) scale(1)"><use href="#pin" fill="#4285f4" opacity=".84"/><g stroke="#45669e" opacity=".9"><use href="#cam"/></g></g>
<g transform="translate(902.9 416.1) scale(1)"><use href="#pin" fill="#a89a2c" opacity=".84"/><g stroke="#78713a" opacity=".9"><use href="#cam"/></g></g>
<g transform="translate(1012.5 391) scale(1)"><use href="#pin" fill="#7cb342" opacity=".84"/><g stroke="#627d45" opacity=".9"><use href="#cam"/></g></g>
<g transform="translate(998.7 395.5) scale(1)"><use href="#pin" fill="#7cb342" opacity=".84"/><g stroke="#627d45" opacity=".9"><use href="#cam"/></g></g>
<g transform="translate(1006.7 403.3) scale(0.9)"><use href="#pin" fill="#7cb342" opacity=".84"/><g stroke="#627d45" opacity=".9"><use href="#cam"/></g></g>
<g transform="translate(998.1 447.3) scale(1)"><use href="#pin" fill="#7cb342" opacity=".84"/><g stroke="#627d45" opacity=".9"><use href="#cam"/></g></g>
<g transform="translate(1010.7 448.1) scale(1)"><use href="#pin" fill="#7cb342" opacity=".84"/><g stroke="#627d45" opacity=".9"><use href="#cam"/></g></g>
<g transform="translate(1058.7 445.5) scale(1)"><use href="#pin" fill="#eab000" opacity=".84"/><g stroke="#997c24" opacity=".9"><use href="#cam"/></g></g>
<g transform="translate(788.3 459.9) scale(1)"><use href="#pin" fill="#c79a12" opacity=".84"/><g stroke="#87712d" opacity=".9"><use href="#cam"/></g></g>
<g transform="translate(1097.3 337.3) scale(1)"><use href="#pin" fill="#4285f4" opacity=".84"/><g stroke="#45669e" opacity=".9"><use href="#cam"/></g></g>
<g transform="translate(1085.3 369) scale(1)"><use href="#pin" fill="#eab000" opacity=".84"/><g stroke="#997c24" opacity=".9"><use href="#cam"/></g></g>
<g transform="translate(1088.8 385.3) scale(1)"><use href="#pin" fill="#db4437" opacity=".84"/><g stroke="#91463f" opacity=".9"><use href="#cam"/></g></g>
<g transform="translate(1113.3 405.9) scale(1)"><use href="#pin" fill="#4285f4" opacity=".84"/><g stroke="#45669e" opacity=".9"><use href="#cam"/></g></g>
<g transform="translate(1190.7 373.3) scale(1)"><use href="#pin" fill="#eab000" opacity=".84"/><g stroke="#997c24" opacity=".9"><use href="#cam"/></g></g>
<g transform="translate(1238.7 330.7) scale(1)"><use href="#pin" fill="#fbbc05" opacity=".84"/><g stroke="#a18226" opacity=".9"><use href="#cam"/></g></g>
<g transform="translate(1220 344.8) scale(1)"><use href="#pin" fill="#4285f4" opacity=".84"/><g stroke="#45669e" opacity=".9"><use href="#cam"/></g></g>
<g transform="translate(1213.3 411.2) scale(1)"><use href="#pin" fill="#4285f4" opacity=".84"/><g stroke="#45669e" opacity=".9"><use href="#cam"/></g></g>
<g transform="translate(1283.5 395) scale(1.1)"><use href="#pin" fill="#4285f4" opacity=".84"/><g stroke="#45669e" opacity=".9"><use href="#cam"/></g></g>
<g transform="translate(1275.2 415.2) scale(1.1)"><use href="#pin" fill="#4285f4" opacity=".84"/><g stroke="#45669e" opacity=".9"><use href="#cam"/></g></g>
<g transform="translate(1315.2 412.8) scale(1.1)"><use href="#pin" fill="#4285f4" opacity=".84"/><g stroke="#45669e" opacity=".9"><use href="#cam"/></g></g>
<g transform="translate(1365.3 340) scale(1.1)"><use href="#pin" fill="#db4437" opacity=".84"/><g stroke="#91463f" opacity=".9"><use href="#cam"/></g></g>
<g transform="translate(1350.1 353.3) scale(1.1)"><use href="#pin" fill="#db4437" opacity=".84"/><g stroke="#91463f" opacity=".9"><use href="#cam"/></g></g>
<g transform="translate(1404 372) scale(1.1)"><use href="#pin" fill="#4285f4" opacity=".84"/><g stroke="#45669e" opacity=".9"><use href="#cam"/></g></g>
<g transform="translate(1352 414) scale(1.1)"><use href="#pin" fill="#4285f4" opacity=".84"/><g stroke="#45669e" opacity=".9"><use href="#cam"/></g></g>
<g transform="translate(1358.7 416) scale(1.1)"><use href="#pin" fill="#4285f4" opacity=".84"/><g stroke="#45669e" opacity=".9"><use href="#cam"/></g></g>
<g transform="translate(1348.5 442.7) scale(1.1)"><use href="#pin" fill="#4285f4" opacity=".84"/><g stroke="#45669e" opacity=".9"><use href="#cam"/></g></g>
<g transform="translate(1388.8 453.9) scale(1.1)"><use href="#pin" fill="#eab000" opacity=".84"/><g stroke="#997c24" opacity=".9"><use href="#cam"/></g></g>
<g transform="translate(1199.2 472) scale(1)"><use href="#pin" fill="#4285f4" opacity=".84"/><g stroke="#45669e" opacity=".9"><use href="#cam"/></g></g>
<g transform="translate(1186.7 489) scale(1)"><use href="#pin" fill="#4285f4" opacity=".84"/><g stroke="#45669e" opacity=".9"><use href="#cam"/></g></g>
<g transform="translate(1192 494) scale(1)"><use href="#pin" fill="#4285f4" opacity=".84"/><g stroke="#45669e" opacity=".9"><use href="#cam"/></g></g>
<g transform="translate(1431.3 393) scale(1.1)"><use href="#pin" fill="#4285f4" opacity=".84"/><g stroke="#45669e" opacity=".9"><use href="#cam"/></g></g>
<g transform="translate(1423.4 412.8) scale(1.1)"><use href="#pin" fill="#4285f4" opacity=".84"/><g stroke="#45669e" opacity=".9"><use href="#cam"/></g></g>
<g transform="translate(1465.8 410) scale(1.1)"><use href="#pin" fill="#4285f4" opacity=".84"/><g stroke="#45669e" opacity=".9"><use href="#cam"/></g></g>
<g transform="translate(1503 421) scale(1.1)"><use href="#pin" fill="#4285f4" opacity=".84"/><g stroke="#45669e" opacity=".9"><use href="#cam"/></g></g>
<g transform="translate(1512 420) scale(1.1)"><use href="#pin" fill="#4285f4" opacity=".84"/><g stroke="#45669e" opacity=".9"><use href="#cam"/></g></g>
<g transform="translate(1551.2 311.9) scale(1.1)"><use href="#pin" fill="#fbbc05" opacity=".68"/><g stroke="#a18226" opacity=".9"><use href="#cam"/></g></g>
<g transform="translate(1538.7 296.5) scale(1.2)"><use href="#pin" fill="#4285f4" opacity=".68"/><g stroke="#45669e" opacity=".9"><use href="#cam"/></g></g>
<g transform="translate(1528.9 341.8) scale(1.2)"><use href="#pin" fill="#4285f4" opacity=".84"/><g stroke="#45669e" opacity=".9"><use href="#cam"/></g></g>
<g transform="translate(1555.3 376) scale(1.2)"><use href="#pin" fill="#5e9e58" opacity=".84"/><g stroke="#537350" opacity=".9"><use href="#cam"/></g></g>
<g transform="translate(1566 422) scale(1.1)"><use href="#pin" fill="#4285f4" opacity=".84"/><g stroke="#45669e" opacity=".9"><use href="#cam"/></g></g>
<g transform="translate(1574 423) scale(1.2)"><use href="#pin" fill="#4285f4" opacity=".84"/><g stroke="#45669e" opacity=".9"><use href="#cam"/></g></g>
<g transform="translate(1618.3 277.3) scale(1.2)"><use href="#pin" fill="#fbbc05" opacity=".68"/><g stroke="#a18226" opacity=".9"><use href="#cam"/></g></g>
<g transform="translate(1614 428) scale(1.1)"><use href="#pin" fill="#4285f4" opacity=".84"/><g stroke="#45669e" opacity=".9"><use href="#cam"/></g></g>
<g transform="translate(1622.2 432) scale(1.2)"><use href="#pin" fill="#4285f4" opacity=".84"/><g stroke="#45669e" opacity=".9"><use href="#cam"/></g></g>
<g transform="translate(1558.7 472.9) scale(1.2)"><use href="#pin" fill="#7cb342" opacity=".84"/><g stroke="#627d45" opacity=".9"><use href="#cam"/></g></g>
<g transform="translate(1623.4 474.4) scale(1.2)"><use href="#pin" fill="#4285f4" opacity=".84"/><g stroke="#45669e" opacity=".9"><use href="#cam"/></g></g>
<g transform="translate(1687.7 269) scale(1.3)"><use href="#pin" fill="#7cb342" opacity=".68"/><g stroke="#627d45" opacity=".9"><use href="#cam"/></g></g>
<g transform="translate(1686.2 291.9) scale(1.3)"><use href="#pin" fill="#4285f4" opacity=".68"/><g stroke="#45669e" opacity=".9"><use href="#cam"/></g></g>
<g transform="translate(1748.7 244) scale(1.4)"><use href="#pin" fill="#7cb342" opacity=".68"/><g stroke="#627d45" opacity=".9"><use href="#cam"/></g></g>
<g transform="translate(1744.3 264.5) scale(1.3)"><use href="#pin" fill="#7cb342" opacity=".68"/><g stroke="#627d45" opacity=".9"><use href="#cam"/></g></g>
<g transform="translate(1820.9 266) scale(1.4)"><use href="#pin" fill="#7cb342" opacity=".68"/><g stroke="#627d45" opacity=".9"><use href="#cam"/></g></g>
<g transform="translate(1814.5 290) scale(1.3)"><use href="#pin" fill="#4285f4" opacity=".68"/><g stroke="#45669e" opacity=".9"><use href="#cam"/></g></g>
<g transform="translate(1663.9 309) scale(1.3)"><use href="#pin" fill="#4285f4" opacity=".68"/><g stroke="#45669e" opacity=".9"><use href="#cam"/></g></g>
<g transform="translate(1664 328.5) scale(1.2)"><use href="#pin" fill="#fbbc05" opacity=".84"/><g stroke="#a18226" opacity=".9"><use href="#cam"/></g></g>
<g transform="translate(1664.2 365) scale(1.2)"><use href="#pin" fill="#4285f4" opacity=".84"/><g stroke="#45669e" opacity=".9"><use href="#cam"/></g></g>
<g transform="translate(1644 377) scale(1.2)"><use href="#pin" fill="#4285f4" opacity=".84"/><g stroke="#45669e" opacity=".9"><use href="#cam"/></g></g>
<g transform="translate(1678 383) scale(1.2)"><use href="#pin" fill="#4285f4" opacity=".84"/><g stroke="#45669e" opacity=".9"><use href="#cam"/></g></g>
<g transform="translate(1660 398) scale(1.2)"><use href="#pin" fill="#4285f4" opacity=".84"/><g stroke="#45669e" opacity=".9"><use href="#cam"/></g></g>
<g transform="translate(1666 406.7) scale(1.2)"><use href="#pin" fill="#4285f4" opacity=".84"/><g stroke="#45669e" opacity=".9"><use href="#cam"/></g></g>
<g transform="translate(1705.2 425) scale(1.2)"><use href="#pin" fill="#4285f4" opacity=".84"/><g stroke="#45669e" opacity=".9"><use href="#cam"/></g></g>
<g transform="translate(1692.7 434) scale(1.2)"><use href="#pin" fill="#4285f4" opacity=".84"/><g stroke="#45669e" opacity=".9"><use href="#cam"/></g></g>
<g transform="translate(1683.4 476) scale(1.2)"><use href="#pin" fill="#4285f4" opacity=".84"/><g stroke="#45669e" opacity=".9"><use href="#cam"/></g></g>
<g transform="translate(1694.6 468) scale(1.2)"><use href="#pin" fill="#7cb342" opacity=".84"/><g stroke="#627d45" opacity=".9"><use href="#cam"/></g></g>
<g transform="translate(1774 470) scale(1.2)"><use href="#pin" fill="#4285f4" opacity=".84"/><g stroke="#45669e" opacity=".9"><use href="#cam"/></g></g>
<g transform="translate(1744.2 487) scale(1.3)"><use href="#pin" fill="#7cb342" opacity=".84"/><g stroke="#627d45" opacity=".9"><use href="#cam"/></g></g>
<g transform="translate(1744.2 496) scale(1.3)"><use href="#pin" fill="#7cb342" opacity=".84"/><g stroke="#627d45" opacity=".9"><use href="#cam"/></g></g>
<g transform="translate(1760.7 505) scale(1.2)"><use href="#pin" fill="#4285f4" opacity=".84"/><g stroke="#45669e" opacity=".9"><use href="#cam"/></g></g>
<circle cx="1664" cy="299" r="14.500" fill="#8c96a4" opacity=".85"/><circle cx="1664" cy="299" r="14.500" fill="none" stroke="#cdbd8c" stroke-width="1.600"/><path d="M1655 291l9 14 9-14z" fill="#5f89c9" opacity=".7"/>
<circle cx="764" cy="452.700" r="11.500" fill="#4f80dc" opacity=".62"/><circle cx="764" cy="452.700" r="11.500" fill="none" stroke="#a9c1ee" stroke-width="1.200" opacity=".9"/>
</svg>
<!--VIEWEND-->
</div>
<div id="views" class="abs"><span>Views</span><i></i></div>
<div id="chat" class="abs">
 <svg class="abs" style="left:19px;top:19px" width="22" height="22" viewBox="0 0 22 22" fill="none" stroke="#fff" stroke-width="2" stroke-linejoin="round"><path d="M11.5 2.5a8.3 8.3 0 1 1-4 15.6L2.5 19.5l1.6-4.6A8.3 8.3 0 0 1 11.5 2.5z"/></svg>
</div>
</body>
</html>
